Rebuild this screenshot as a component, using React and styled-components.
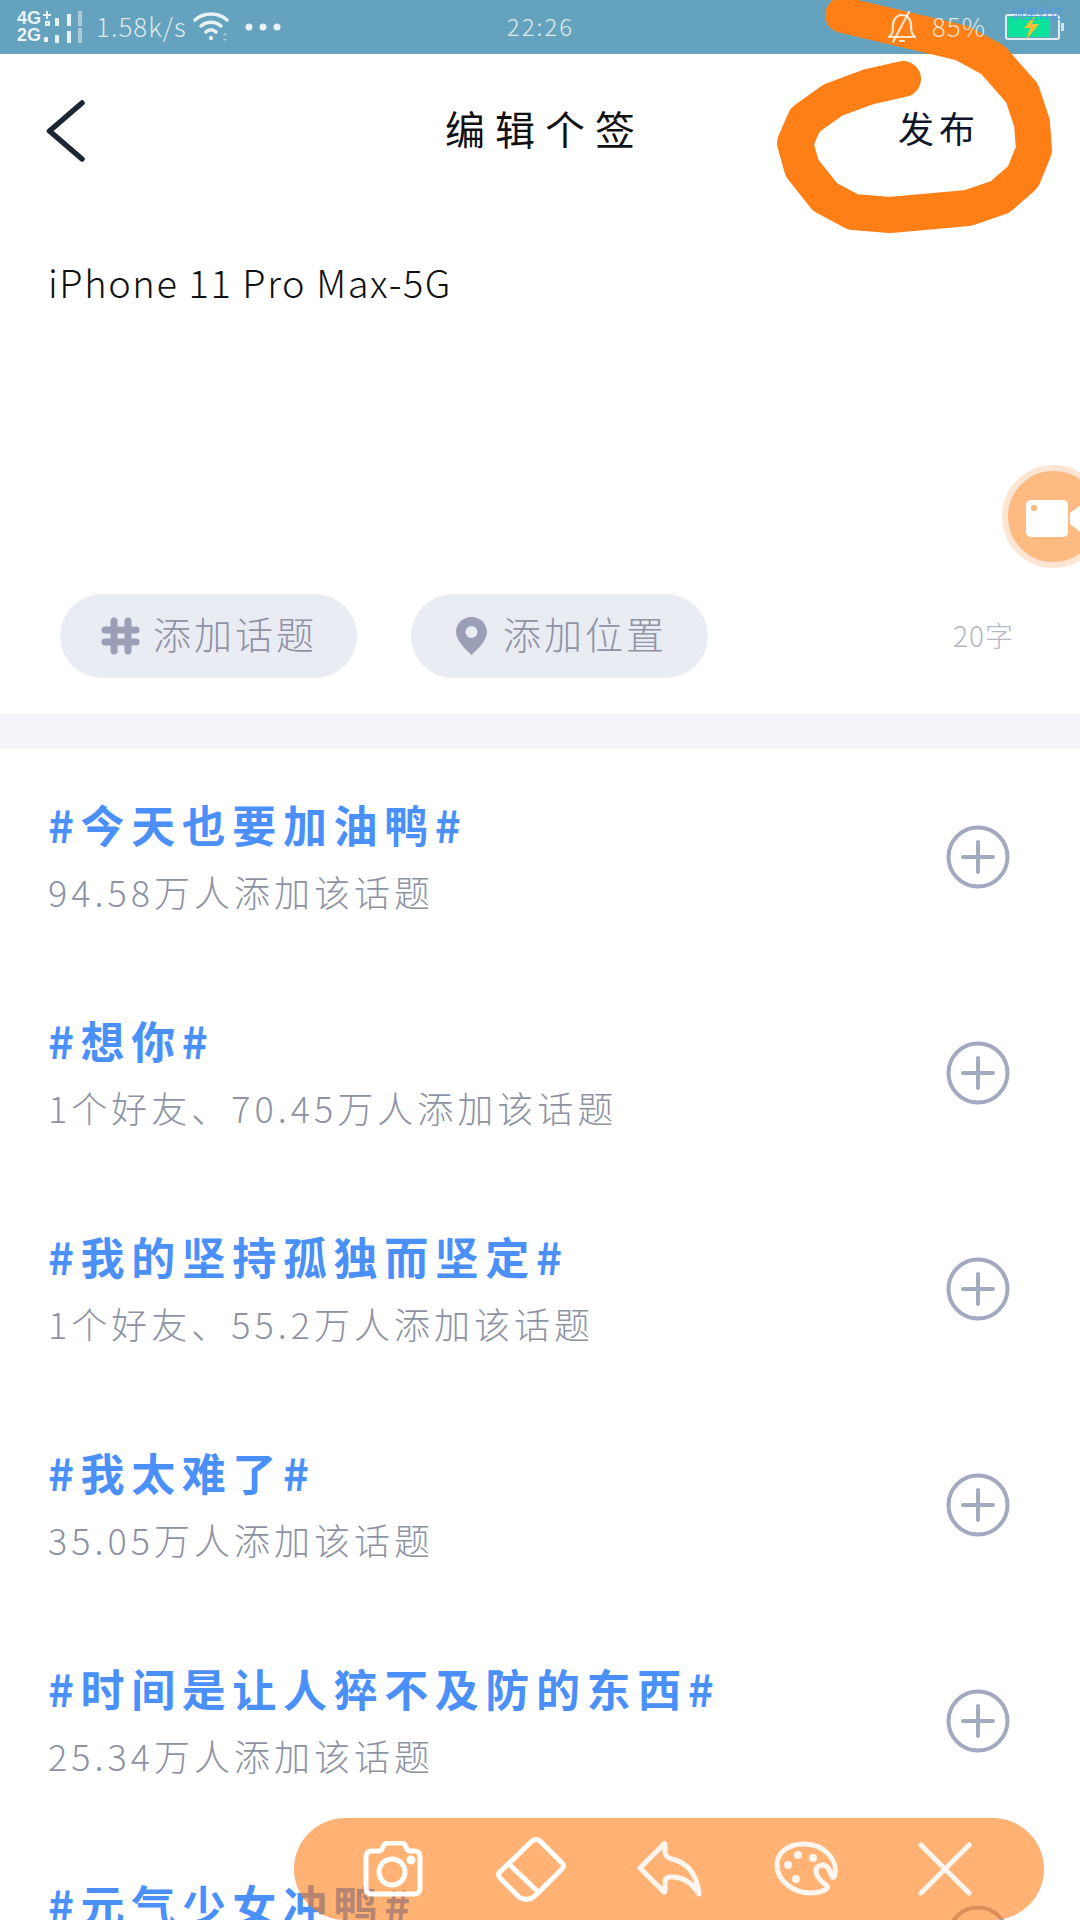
import React from 'react'
import styled, { createGlobalStyle } from 'styled-components'

const topics = [
  { title: '#今天也要加油鸭#', sub: '94.58万人添加该话题' },
  { title: '#想你#', sub: '1个好友、70.45万人添加该话题' },
  { title: '#我的坚持孤独而坚定#', sub: '1个好友、55.2万人添加该话题' },
  { title: '#我太难了#', sub: '35.05万人添加该话题' },
  { title: '#时间是让人猝不及防的东西#', sub: '25.34万人添加该话题' },
  { title: '#元气少女冲鸭#', sub: '' },
]

const GlobalStyle = createGlobalStyle`
  html, body { margin: 0; padding: 0; background: #fff; }
  body { font-family: "Noto Sans CJK SC", "Noto Sans", sans-serif; }
`

const Screen = styled.div`
  position: relative;
  width: 1080px;
  height: 1920px;
  overflow: hidden;
  background: #fff;
`

const StatusBar = styled.div`
  display: grid;
  grid-template-columns: 1fr auto 1fr;
  align-items: center;
  height: 54px;
  padding: 0 16px 0 17px;
  box-sizing: border-box;
  background: #65a2bd;
  color: rgba(255, 255, 255, 0.78);
`

const StatusLeft = styled.div`
  display: flex;
  align-items: center;
`

const SignalStack = styled.div`
  display: flex;
  flex-direction: column;
  gap: 2px;
  margin-right: 8px;
`

const SignalRow = styled.div`
  display: flex;
  align-items: center;
  height: 15px;
`

const SignalLabel = styled.span`
  width: 26px;
  font-family: "Liberation Sans", sans-serif;
  font-size: 18px;
  font-weight: 700;
  line-height: 15px;
  color: rgba(255, 255, 255, 0.88);
`

const Speed = styled.span`
  margin-bottom: 2px;
  font-size: 26px;
  font-weight: 300;
  letter-spacing: 1px;
  line-height: 52px;
`

const WifiIcon = styled.svg`
  margin-left: 6px;
`

const Dots = styled.svg`
  margin-left: 14px;
`

const Time = styled.span`
  margin-bottom: 3px;
  font-size: 24px;
  font-weight: 300;
  letter-spacing: 2px;
`

// sits above the marker stroke, the bar's own background stays below it
const StatusRight = styled.div`
  position: relative;
  z-index: 3;
  display: flex;
  align-items: center;
  justify-content: flex-end;
  gap: 15px;
`

const Percent = styled.span`
  margin: 0 4px 4px 0;
  font-size: 26px;
  font-weight: 300;
  letter-spacing: 1px;
`

const Watermark = styled.span`
  position: absolute;
  top: -1px;
  right: 0;
  font-size: 13px;
  line-height: 14px;
  color: #4f9ce0;
`

const Header = styled.header`
  display: grid;
  grid-template-columns: 1fr auto 1fr;
  align-items: center;
  height: 152px;
  padding: 0 46px;
`

const BackIcon = styled.svg`
  display: block;
`

const Title = styled.h1`
  margin: 0 0 5px;
  padding-left: 10px;
  font-size: 40px;
  font-weight: 400;
  letter-spacing: 10px;
  color: #111;
`

const Publish = styled.span`
  justify-self: end;
  margin: 0 54px 6px 0;
  font-size: 36px;
  letter-spacing: 5px;
  color: #10162a;
`

const Compose = styled.section`
  display: flex;
  flex-direction: column;
  height: 508px;
  padding: 48px 48px 36px;
  box-sizing: border-box;
`

const Draft = styled.div`
  flex: 1;
  font-size: 38px;
  font-weight: 300;
  line-height: 56px;
  letter-spacing: 1.6px;
  color: #111;
`

const ChipRow = styled.div`
  display: flex;
  align-items: center;
  gap: 54px;
  padding: 0 18px 0 12px;
`

const Chip = styled.div`
  display: flex;
  align-items: center;
  gap: ${(p) => p.$gap}px;
  width: 297px;
  height: 84px;
  padding-left: ${(p) => p.$inset}px;
  box-sizing: border-box;
  border-radius: 42px;
  background: #e9ecf3;
  font-size: 38px;
  font-weight: 300;
  letter-spacing: 3px;
  color: #8f93a5;
`

const ChipLabel = styled.span`
  line-height: 1;
  margin-bottom: 6px;
`

const Count = styled.span`
  margin-left: auto;
  margin-bottom: 2px;
  font-size: 28px;
  font-weight: 300;
  letter-spacing: 1px;
  color: #b4b7c4;
`

const Divider = styled.div`
  height: 35px;
  background: #f4f5f9;
`

const TopicRow = styled.div`
  display: flex;
  align-items: center;
  justify-content: space-between;
  height: 216px;
  padding: 0 70px 0 48px;
`

const TopicText = styled.div`
  display: flex;
  flex-direction: column;
  gap: 19px;
  margin-bottom: 3px;
`

const TopicTitle = styled.div`
  font-size: 44px;
  font-weight: 700;
  line-height: 52px;
  letter-spacing: 6.6px;
  color: #4a90f8;
`

const TopicSub = styled.div`
  min-height: 44px;
  font-size: 36px;
  font-weight: 300;
  line-height: 44px;
  letter-spacing: 4px;
  color: #8e93a3;
`

const VideoButton = styled.div`
  position: absolute;
  top: 465px;
  left: 1002px;
  width: 103px;
  height: 103px;
  box-sizing: border-box;
  border: 6px solid #fde5d3;
  border-radius: 50%;
  background: #fdbb82;
`

const VideoGlyph = styled.svg`
  display: block;
  margin: 29px 0 0 17px;
`

const MarkerStroke = styled.svg`
  position: absolute;
  top: 0;
  left: 0;
  z-index: 2;
  pointer-events: none;
`

const Toolbar = styled.div`
  position: absolute;
  left: 294px;
  bottom: 0;
  display: grid;
  grid-template-columns: repeat(5, 138px);
  align-items: center;
  justify-items: center;
  width: 750px;
  height: 102px;
  padding-left: 30px;
  box-sizing: border-box;
  border-radius: 51px;
  background: rgba(255, 127, 23, 0.6);
`

const ToolIcon = styled.svg`
  display: block;
  fill: none;
  stroke: ${(p) => p.$tint};
  stroke-width: 5;
  stroke-linecap: round;
  stroke-linejoin: round;
`

function SignalBars({ extra }) {
  return (
    <svg width="45" height="15" viewBox="0 0 45 15">
      {extra === 'plus' ? (
        <path d="M4 0v8M0 4h8M3 11h3v3H3z" stroke="#fff" strokeOpacity=".85" strokeWidth="2" fill="none" />
      ) : (
        <rect x="1" y="9" width="4" height="5" fill="#fff" fillOpacity=".85" />
      )}
      <rect x="12" y="7" width="4" height="8" fill="#fff" fillOpacity=".85" />
      <rect x="24" y="3" width="4" height="12" fill="#fff" fillOpacity=".85" />
      <rect x="35" y="0" width="4" height="15" fill="#fff" fillOpacity=".45" />
    </svg>
  )
}

function PlusCircle() {
  return (
    <svg width="64" height="64" viewBox="0 0 64 64" fill="none" stroke="#a3a9bf" strokeLinecap="round">
      <circle cx="32" cy="32" r="29.5" strokeWidth="4" />
      <path d="M17 32h30M32 17v30" strokeWidth="4" />
    </svg>
  )
}

function App() {
  return (
    <Screen>
      <GlobalStyle />
      <StatusBar>
        <StatusLeft>
          <SignalStack>
            <SignalRow>
              <SignalLabel>4G</SignalLabel>
              <SignalBars extra="plus" />
            </SignalRow>
            <SignalRow>
              <SignalLabel>2G</SignalLabel>
              <SignalBars />
            </SignalRow>
          </SignalStack>
          <Speed>1.58k/s</Speed>
          <WifiIcon width="38" height="32" viewBox="0 0 38 32" fill="none" stroke="#fff" strokeOpacity=".85" strokeWidth="3.5" strokeLinecap="round">
            <path d="M2 9C11 1 25 1 34 9" />
            <path d="M8 15C14 10 22 10 28 15" />
            <path d="M13 21C16 18 20 18 23 21" />
            <circle cx="18" cy="27" r="2" fill="#fff" stroke="none" />
            <path d="M30 24l2-2 2 2zM30 28l2 2 2-2z" fill="#fff" fillOpacity=".5" stroke="none" />
          </WifiIcon>
          <Dots width="36" height="8" viewBox="0 0 36 8" fill="#fff" fillOpacity=".85">
            <circle cx="4" cy="4" r="3.5" />
            <circle cx="18" cy="4" r="3.5" />
            <circle cx="32" cy="4" r="3.5" />
          </Dots>
        </StatusLeft>
        <Time>22:26</Time>
        <StatusRight>
          <svg width="30" height="32" viewBox="0 0 30 32" fill="none" stroke="#fff" strokeOpacity=".8" strokeWidth="2.2" strokeLinecap="round" strokeLinejoin="round">
            <path d="M2 26c4-3 4-7 4-12 0-6 4-10 9-10s9 4 9 10c0 5 0 9 4 12z" />
            <path d="M22 1L6 31" />
            <path d="M13 30h4" />
          </svg>
          <Percent>85%</Percent>
          <svg width="59" height="26" viewBox="0 0 59 26">
            <rect x="1" y="1" width="53" height="24" rx="2" fill="none" stroke="#fff" strokeOpacity=".8" strokeWidth="2" />
            <rect x="3" y="3" width="42" height="20" fill="#0be39b" />
            <rect x="56" y="9" width="3" height="8" fill="#fff" fillOpacity=".7" />
            <path d="M31 0L19 14h6l-4 12 13-16h-7z" fill="#f3c12f" />
          </svg>
          <Watermark>流星社区</Watermark>
        </StatusRight>
      </StatusBar>

      <Header>
        <BackIcon width="40" height="66" viewBox="0 0 40 66" fill="none" stroke="#1c2733" strokeWidth="5.5" strokeLinecap="round" strokeLinejoin="round">
          <path d="M36 6L3.500 34L36 62" />
        </BackIcon>
        <Title>编辑个签</Title>
        <Publish>发布</Publish>
      </Header>

      <Compose>
        <Draft>iPhone 11 Pro Max-5G</Draft>
        <ChipRow>
          <Chip $inset={41} $gap={13}>
            <svg width="39" height="38" viewBox="0 0 39 38" fill="none" stroke="#9a9fb6" strokeWidth="7" strokeLinecap="round">
              <path d="M13 4v30M27 4v30M4 13h31M4 25h31" />
            </svg>
            <ChipLabel>添加话题</ChipLabel>
          </Chip>
          <Chip $inset={45} $gap={16}>
            <svg width="31" height="38" viewBox="0 0 31 38">
              <path fillRule="evenodd" fill="#9a9fb6" d="M15.5 0C24 0 31 6.600 31 15c0 8-9 17-15.500 23C9 32 0 23 0 15 0 6.600 7 0 15.500 0zM15.500 9a6 6 0 100 12 6 6 0 000-12z" />
            </svg>
            <ChipLabel>添加位置</ChipLabel>
          </Chip>
          <Count>20字</Count>
        </ChipRow>
      </Compose>

      <Divider />

      {topics.map((t) => (
        <TopicRow key={t.title}>
          <TopicText>
            <TopicTitle>{t.title}</TopicTitle>
            <TopicSub>{t.sub}</TopicSub>
          </TopicText>
          <PlusCircle />
        </TopicRow>
      ))}

      <VideoButton>
        <VideoGlyph width="63" height="38" viewBox="0 0 63 38">
          <rect x="1" y="0" width="42" height="37" rx="5" fill="#fff" />
          <circle cx="9" cy="8" r="3.200" fill="#fdbb82" />
          <path d="M45 13L60 2V36L45 24Z" fill="#fff" />
        </VideoGlyph>
      </VideoButton>

      <MarkerStroke width="1080" height="260" viewBox="0 0 1080 260" fill="none" stroke="#ff7f17" strokeWidth="36" strokeLinecap="round" strokeLinejoin="round">
        <path d="M843 15L962 43L993 60L1022 93L1032 123L1034 150L1023 177L1000 197L968 208L890 215L853 212L825 197L802 168L795 143L805 120L833 100L868 87L903 79" />
      </MarkerStroke>

      <Toolbar>
        <ToolIcon $tint="#fff" width="60" height="56" viewBox="0 0 60 56">
          <path d="M9 10H16Q18 10 19 8L21 4Q22 2 25 2H38Q41 2 42 4L44 8Q45 10 47 10H51Q57 10 57 16V47Q57 53 51 53H9Q3 53 3 47V16Q3 10 9 10Z" />
          <circle cx="29" cy="31" r="13" />
          <circle cx="48" cy="19" r="2" fill="#fff" />
        </ToolIcon>
        <ToolIcon $tint="#fff" width="72" height="68" viewBox="0 0 72 68">
          <path d="M37 6Q41 3 45 6L67 28Q70 31 67 34L42 59Q33 68 24 62L6 44Q1 39 6 36Z" />
          <path d="M14 29L41 55" />
        </ToolIcon>
        <ToolIcon $tint="#fff6ef" width="66" height="56" viewBox="0 0 66 56">
          <path d="M28 3L4 27L28 51Q29 52 29 48V41Q29 36 34 36Q52 35 63 53Q60 24 36 18Q29 16 29 11V4Q29 2 28 3Z" />
        </ToolIcon>
        <ToolIcon $tint="#fff6ef" width="66" height="56" viewBox="0 0 66 56">
          <path d="M60 36C66 22 52 3 30 3C12 3 3 13 3 24C3 40 20 52 36 52C46 52 56 48 53 45C50 42 42 38 42 30C42 24 50 22 54 27C57 30 57 38 60 36Z" />
          <circle cx="14" cy="24" r="1.500" fill="#fff6ef" />
          <circle cx="24" cy="14" r="1.500" fill="#fff6ef" />
          <circle cx="39" cy="17" r="1.500" fill="#fff6ef" />
          <circle cx="22" cy="38" r="1.500" fill="#fff6ef" />
        </ToolIcon>
        <ToolIcon $tint="#fff6ef" width="54" height="54" viewBox="0 0 54 54">
          <path d="M3 3L51 51M51 3L3 51" />
        </ToolIcon>
      </Toolbar>
    </Screen>
  )
}

export default App
